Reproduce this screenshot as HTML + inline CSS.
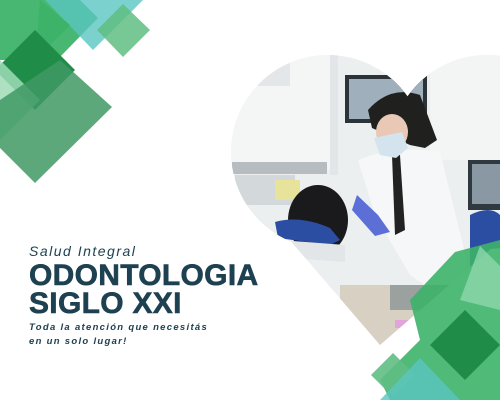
<!DOCTYPE html>
<html><head><meta charset="utf-8"><style>
html,body{margin:0;padding:0;width:500px;height:400px;overflow:hidden;background:#fff;font-family:"Liberation Sans",sans-serif}
.t{position:absolute;left:29px;color:#1e4151}
</style></head><body>
<svg width="500" height="400" style="position:absolute;left:0;top:0">
<defs>
<clipPath id="h">
<circle cx="328" cy="152" r="97"/>
<circle cx="487" cy="152" r="97"/>
<polygon points="234,175 380,345 570,180 487,152 328,152"/>
</clipPath>
</defs>
<g clip-path="url(#h)">
<rect x="220" y="40" width="300" height="320" fill="#eceff0"/>
<rect x="230" y="40" width="100" height="130" fill="#f4f5f5"/>
<rect x="258" y="56" width="32" height="30" fill="#e4e7e9"/>
<rect x="330" y="55" width="8" height="120" fill="#e3e6e8"/>
<rect x="345" y="75" width="82" height="48" fill="#2c3338"/>
<rect x="349" y="79" width="74" height="40" fill="#9fb0bc"/>
<rect x="430" y="50" width="80" height="110" fill="#f3f4f4"/>
<rect x="468" y="160" width="32" height="50" fill="#2f3a40"/>
<rect x="472" y="164" width="28" height="40" fill="#8a98a3"/>
<rect x="232" y="162" width="95" height="12" fill="#b7bcc0"/>
<rect x="235" y="175" width="60" height="30" fill="#d3d8db"/>
<rect x="275" y="180" width="25" height="20" fill="#e8e39a"/>
<ellipse cx="318" cy="220" rx="30" ry="35" fill="#1a1a1c"/>
<path d="M275,222 Q300,215 330,228 L340,240 L330,245 L278,238 Z" fill="#2b4ea2"/>
<path d="M280,240 L345,245 L345,262 L290,258 Z" fill="#e3e6e8"/>
<path d="M358,160 Q395,145 440,152 L468,265 L440,295 L410,275 L375,215 Z" fill="#f6f7f8"/>
<path d="M392,155 L400,155 L405,230 L395,235 Z" fill="#222"/>
<path d="M368,110 Q390,85 420,95 L437,140 L425,148 L410,145 L372,128 Z" fill="#20201f"/>
<ellipse cx="392" cy="132" rx="16" ry="18" fill="#e9c9b5"/>
<path d="M374,138 L402,132 L408,148 L396,158 L380,155 Z" fill="#d4e4ee"/>
<path d="M357,195 L378,215 L390,232 L375,236 L352,210 Z" fill="#5b6fd6"/>
<path d="M470,215 Q490,205 500,215 L500,280 L470,270 Z" fill="#2b4ea2"/>
<rect x="340" y="285" width="100" height="60" fill="#d9d0c4"/>
<rect x="390" y="285" width="60" height="25" fill="#9aa19f"/>
<rect x="395" y="320" width="40" height="8" fill="#e2a4d8"/>
</g>
<g>
<polygon points="0,0 80,0 98,18 57,60 0,60" fill="#3db369" opacity=".95"/>
<polygon points="45,0 143,0 93,50" fill="#5ac6c0" opacity=".8"/>
<polygon points="35,60 70,25 40,0" fill="#3db369"/>
<polygon points="123,4 150,30 123,57 97,30" fill="#5fbe83" opacity=".85"/>
<polygon points="35,30 75,70 35,110 -5,70" fill="#1f8c48"/>
<polygon points="0,60 40,100 0,140" fill="#9fdcb7" opacity=".85"/>
<polygon points="60,60 112,107 35,183 0,148 0,100" fill="#3f9964" opacity=".85"/>
<polygon points="500,240 500,400 390,400 380,380 420,340 410,300 455,252" fill="#3db369" opacity=".9"/>
<polygon points="480,246 500,266 500,310 460,300" fill="#8dd7ab" opacity=".8"/>
<polygon points="465,310 500,345 465,380 430,345" fill="#1f8c48"/>
<polygon points="393,353 415,375 393,397 371,375" fill="#5fbe83" opacity=".9"/>
<polygon points="420,358 460,400 380,400" fill="#5ac6c0" opacity=".8"/>
</g>
</svg>
<div class="t" style="top:243px;font-size:14px;font-style:italic;letter-spacing:1.5px">Salud Integral</div>
<div class="t" style="top:259px;font-size:30px;font-weight:bold;letter-spacing:.3px;-webkit-text-stroke:.6px #1e4151">ODONTOLOGIA</div>
<div class="t" style="top:287px;font-size:30px;font-weight:bold;letter-spacing:.3px;-webkit-text-stroke:.6px #1e4151">SIGLO XXI</div>
<div class="t" style="top:321px;font-size:9.5px;font-style:italic;font-weight:bold;letter-spacing:1.3px;line-height:14px">Toda la atención que necesitás<br>en un solo lugar!</div>
</body></html>
